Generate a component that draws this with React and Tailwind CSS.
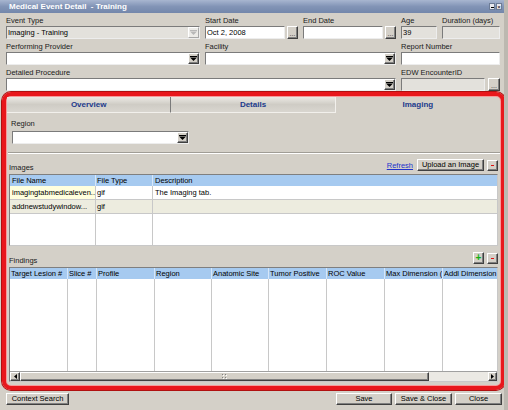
import React from "react";

const raised =
  "bg-[#d4d0c8] border border-t-white border-l-white border-r-[#404040] border-b-[#404040] shadow-[inset_-1px_-1px_0_#808080]";
const sunken =
  "border border-t-[#7b7b7b] border-l-[#7b7b7b] border-r-[#ededed] border-b-[#ededed]";

function Arrow({ disabled }) {
  return (
    <svg width="7" height="5" viewBox="0 0 7 5">
      <rect x="0" y="0" width="7" height="1" fill={disabled ? "#b8b8b8" : "#000"} />
      <path d="M0 1.5h7L3.5 5z" fill={disabled ? "#b8b8b8" : "#000"} />
    </svg>
  );
}

function Label({ children }) {
  return (
    <div className="h-[13px] flex items-end pb-[1px] leading-[9px] text-[7.5px] text-[#1a1a1a] whitespace-nowrap">
      {children}
    </div>
  );
}

function TextBox({ value, disabled, className = "" }) {
  return (
    <div
      className={`h-[13px] ${sunken} ${
        disabled ? "bg-[#e3e1dc]" : "bg-white"
      } pl-[1px] text-[7.5px] leading-[11px] text-black whitespace-nowrap overflow-hidden ${className}`}
    >
      {value}
    </div>
  );
}

function Select({ value, disabled, className = "" }) {
  return (
    <div
      className={`h-[13px] ${sunken} ${
        disabled ? "bg-[#e3e1dc]" : "bg-white"
      } flex items-center ${className}`}
    >
      <div className="flex-1 pl-[1px] text-[7.5px] leading-[11px] text-black whitespace-nowrap overflow-hidden">
        {value}
      </div>
      <div
        className={`w-[11px] h-[11px] flex items-center justify-center ${
          disabled
            ? "bg-[#ecebe8] border border-t-white border-l-white border-r-[#a8a8a8] border-b-[#a8a8a8]"
            : raised
        }`}
      >
        <Arrow disabled={disabled} />
      </div>
    </div>
  );
}

function DotsButton({ className = "" }) {
  return (
    <div
      className={`h-[13px] ${raised} flex items-end justify-center text-[7px] leading-[8px] text-[#333] ${className}`}
    >
      ...
    </div>
  );
}

function Btn({ children, className = "", color = "text-black" }) {
  return (
    <div
      className={`h-[12px] ${raised} flex items-center justify-center text-[7.5px] leading-[10px] ${color} whitespace-nowrap ${className}`}
    >
      {children}
    </div>
  );
}

function MinusBtn() {
  return (
    <div className={`w-[11px] h-[11px] ${raised} flex items-center justify-center`}>
      <div className="w-[3px] h-[1px] bg-[#e01010]" />
    </div>
  );
}

function Field({ label, children, className = "" }) {
  return (
    <div className={`flex flex-col ${className}`}>
      <Label>{label}</Label>
      {children}
    </div>
  );
}

const findCols = [
  ["Target Lesion #", "w-[58px]"],
  ["Slice #", "w-[29px]"],
  ["Profile", "w-[58px]"],
  ["Region", "w-[57px]"],
  ["Anatomic Site", "w-[57px]"],
  ["Tumor Positive", "w-[58px]"],
  ["ROC Value", "w-[58px]"],
  ["Max Dimension (", "w-[58px]"],
  ["Addl Dimension", "flex-1"],
];

export default function App() {
  return (
    <div className="w-[508px] h-[410px] bg-[#d4d0c8] border-r-[4px] border-r-[#bcb8b0] font-['Liberation_Sans',Arial,sans-serif] overflow-hidden flex flex-col">
      {/* Title bar */}
      <div className="h-[13px] shrink-0 bg-linear-to-b from-[#a8b6d0] via-[#8294b6] to-[#7387ab] flex items-center justify-between pl-[9px] pr-[2px]">
        <span className="text-white font-bold text-[8px] leading-[10px] whitespace-pre">
          Medical Event Detail  - Training
        </span>
        <div className="flex gap-[1px]">
          <div className="w-[6px] h-[7px] bg-[#e8e8ee] border border-[#6d7c96] flex items-end justify-center pb-[1px]">
            <div className="w-[3px] h-[1px] bg-black" />
          </div>
          <div className="w-[6px] h-[7px] bg-[#e8e8ee] border border-[#6d7c96] flex items-center justify-center text-[6px] leading-[6px] text-black">
            ×
          </div>
        </div>
      </div>

      {/* Top form */}
      <div className="grid grid-cols-[194px_93px_93px_36px_58px] gap-x-[5px] px-[6px] shrink-0">
        <Field label="Event Type">
          <Select value="Imaging - Training" disabled />
        </Field>
        <Field label="Start Date">
          <div className="flex gap-[2px]">
            <TextBox value="Oct 2, 2008" className="flex-1" />
            <DotsButton className="w-[11px]" />
          </div>
        </Field>
        <Field label="End Date">
          <div className="flex gap-[2px]">
            <TextBox value="" className="flex-1" />
            <DotsButton className="w-[11px]" />
          </div>
        </Field>
        <Field label="Age">
          <TextBox value="39" disabled />
        </Field>
        <Field label="Duration (days)">
          <TextBox value="" disabled />
        </Field>

        <Field label="Performing Provider">
          <Select value="" />
        </Field>
        <Field label="Facility" className="col-span-2">
          <Select value="" />
        </Field>
        <Field label="Report Number" className="col-span-2">
          <TextBox value="" />
        </Field>

        <Field label="Detailed Procedure" className="col-span-3">
          <Select value="" />
        </Field>
        <Field label="EDW EncounterID" className="col-span-2">
          <div className="flex gap-[3px]">
            <TextBox value="" disabled className="flex-1" />
            <DotsButton className="w-[12px]" />
          </div>
        </Field>
      </div>

      {/* Red highlighted panel */}
      <div className="mt-[1px] ml-[2px] w-[503px] h-[298px] shrink-0 border-[4px] border-[#e8171c] rounded-[9px] shadow-[0_0_0_1px_#b01010,inset_0_0_0_1px_#f79a9a] flex flex-col">
        {/* Tabs */}
        <div className="mt-[1px] mx-[1px] h-[16px] grid grid-cols-3 shrink-0">
          <div className="bg-linear-to-b from-[#eceae5] via-[#cfccc5] to-[#d9d6d0] border-r border-r-[#7a7a7a] border-b border-b-[#f2f0ec] flex items-center justify-center text-[8px] font-bold text-[#1c3a8c]">
            Overview
          </div>
          <div className="bg-linear-to-b from-[#eceae5] via-[#cfccc5] to-[#d9d6d0] border-r border-r-[#f2f0ec] border-b border-b-[#f2f0ec] flex items-center justify-center text-[8px] font-bold text-[#1c3a8c]">
            Details
          </div>
          <div className="flex items-center justify-center text-[8px] font-bold text-[#1c3a8c]">
            Imaging
          </div>
        </div>

        {/* Region */}
        <div className="mt-[6px] ml-[5px] h-[10px] leading-[10px] text-[7.5px] text-[#1a1a1a]">
          Region
        </div>
        <Select value="" className="mt-[2px] ml-[6px] w-[177px] shrink-0" />

        {/* Separator */}
        <div className="mt-[8px] ml-[2px] mr-[1px] h-[2px] border-t border-t-[#a09d96] border-b border-b-white shrink-0" />

        {/* Images header */}
        <div className="mt-[5px] mx-[3px] h-[13px] flex items-end justify-between shrink-0">
          <span className="text-[7.5px] leading-[9px] text-[#1a1a1a]">Images</span>
          <div className="flex items-center gap-[3px] pb-[1px]">
            <span className="text-[7.5px] leading-[9px] text-[#2233cc] underline mr-[1px]">
              Refresh
            </span>
            <Btn className="w-[67px]">Upload an Image</Btn>
            <MinusBtn />
          </div>
        </div>

        {/* Images table */}
        <div className="mt-[2px] mx-[3px] h-[72px] shrink-0 bg-white border border-t-[#7f7f7f] border-l-[#7f7f7f] border-r-[#c8c8c8] border-b-[#c8c8c8] flex flex-col text-[7.5px] text-black">
          <div className="h-[11px] flex bg-[#a6caf0] leading-[11px] shrink-0">
            <div className="w-[86px] pl-[2px] border-r border-r-[#d6e7fa]">File Name</div>
            <div className="w-[57px] pl-[1px] border-r border-r-[#d6e7fa]">File Type</div>
            <div className="flex-1 pl-[2px]">Description</div>
          </div>
          <div className="h-[14px] flex leading-[13px] border-b border-b-[#c8c8c8] shrink-0">
            <div className="w-[86px] pl-[2px] bg-[#ffffde] border-r border-r-[#c8c8c8] whitespace-nowrap overflow-hidden">
              imagingtabmedicaleven...
            </div>
            <div className="w-[57px] pl-[1px] border-r border-r-[#c8c8c8]">gif</div>
            <div className="flex-1 pl-[2px]">The Imaging tab.</div>
          </div>
          <div className="h-[14px] flex leading-[13px] bg-[#edecdf] border-b border-b-[#c8c8c8] shrink-0">
            <div className="w-[86px] pl-[2px] border-r border-r-[#c8c8c8] whitespace-nowrap overflow-hidden">
              addnewstudywindow...
            </div>
            <div className="w-[57px] pl-[1px] border-r border-r-[#c8c8c8]">gif</div>
            <div className="flex-1" />
          </div>
          <div className="flex-1 flex">
            <div className="w-[86px] border-r border-r-[#c8c8c8]" />
            <div className="w-[57px] border-r border-r-[#c8c8c8]" />
            <div className="flex-1" />
          </div>
        </div>

        {/* Findings header */}
        <div className="mt-[5px] mx-[3px] h-[14px] flex items-end justify-between shrink-0">
          <span className="text-[7.5px] leading-[9px] text-[#1a1a1a]">Findings</span>
          <div className="flex items-center gap-[3px] pb-[1px]">
            <Btn className="w-[11px] h-[11px] font-bold text-[10px]" color="text-[#10b010]">+</Btn>
            <MinusBtn />
          </div>
        </div>

        {/* Findings table */}
        <div className="mt-[2px] mx-[3px] h-[115px] shrink-0 bg-white border border-t-[#7f7f7f] border-l-[#7f7f7f] border-r-[#c8c8c8] border-b-[#c8c8c8] flex flex-col text-[7.5px] text-black">
          <div className="h-[11px] flex bg-[#a6caf0] leading-[11px] shrink-0">
            {findCols.map(([t, w], i) => (
              <div
                key={t}
                className={`${w} pl-[1px] whitespace-nowrap overflow-hidden ${
                  i < findCols.length - 1 ? "border-r border-r-[#d6e7fa]" : ""
                }`}
              >
                {t}
              </div>
            ))}
          </div>
          <div className="flex-1 flex">
            {findCols.map(([t, w], i) => (
              <div
                key={t}
                className={`${w} ${
                  i < findCols.length - 1 ? "border-r border-r-[#c8c8c8]" : ""
                }`}
              />
            ))}
          </div>
          {/* Scrollbar */}
          <div className="h-[10px] flex bg-[#ebe9e4] border-t border-t-[#a0a0a0] shrink-0">
            <div className={`w-[10px] ${raised} flex items-center justify-center`}>
              <svg width="3" height="5" viewBox="0 0 3 5">
                <path d="M3 0v5L0 2.5z" fill="#000" />
              </svg>
            </div>
            <div className={`w-[409px] ${raised} flex items-center justify-center`}>
              <svg width="5" height="5" viewBox="0 0 5 5">
                <rect x="0" y="0" width="1" height="1" fill="#808080" />
                <rect x="3" y="0" width="1" height="1" fill="#808080" />
                <rect x="0" y="3" width="1" height="1" fill="#808080" />
                <rect x="3" y="3" width="1" height="1" fill="#808080" />
                <rect x="1" y="1" width="1" height="1" fill="#fff" />
                <rect x="4" y="1" width="1" height="1" fill="#fff" />
                <rect x="1" y="4" width="1" height="1" fill="#fff" />
                <rect x="4" y="4" width="1" height="1" fill="#fff" />
              </svg>
            </div>
            <div className="flex-1" />
            <div className={`w-[9px] ${raised} flex items-center justify-center`}>
              <svg width="3" height="5" viewBox="0 0 3 5">
                <path d="M0 0v5L3 2.5z" fill="#000" />
              </svg>
            </div>
          </div>
        </div>
      </div>

      {/* Bottom buttons */}
      <div className="mt-[3px] px-[6px] pr-[2px] flex items-start justify-between">
        <Btn className="w-[63px]">Context Search</Btn>
        <div className="flex gap-[3px]">
          <Btn className="w-[56px]">Save</Btn>
          <Btn className="w-[57px]">Save &amp; Close</Btn>
          <Btn className="w-[47px]">Close</Btn>
        </div>
      </div>
    </div>
  );
}
